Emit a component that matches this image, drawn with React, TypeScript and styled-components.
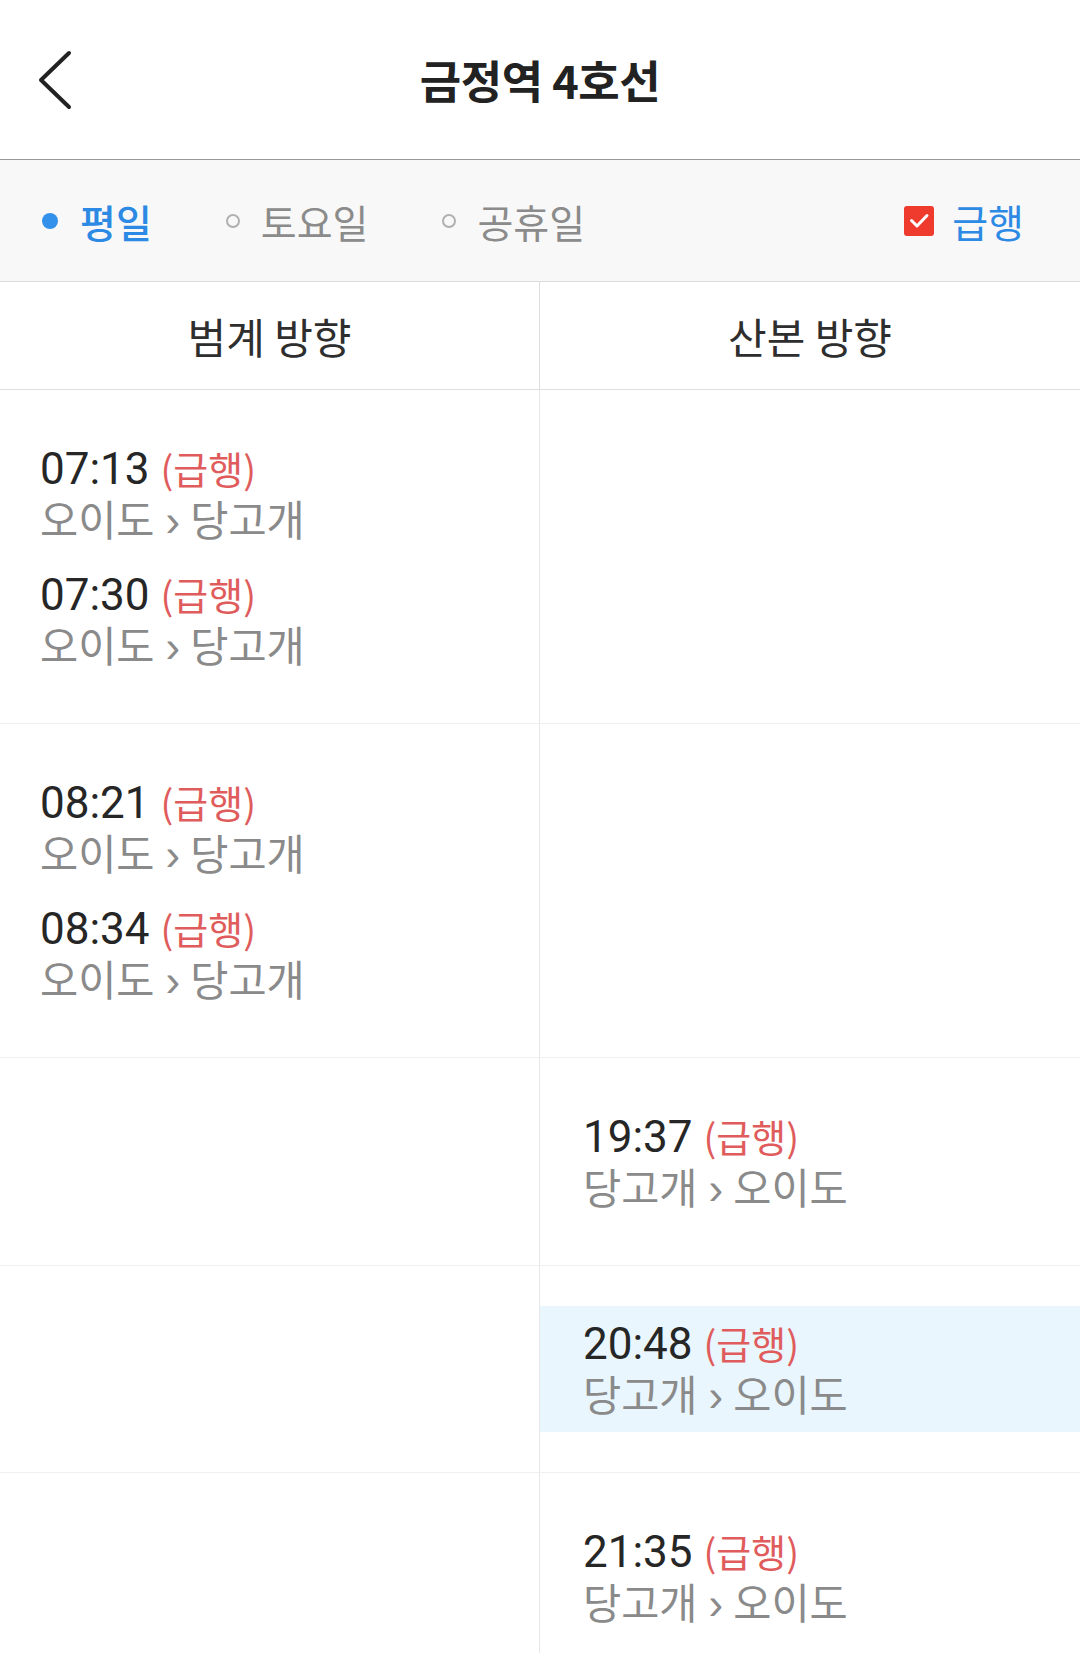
import React, { FC } from 'react'
import styled, { createGlobalStyle } from 'styled-components'

interface Train {
    time: string
    from: string
    to: string
    active?: boolean
}

interface Slot {
    left: Train[]
    right: Train[]
}

const down = (time: string): Train => ({ time, from: '오이도', to: '당고개' })
const up = (time: string, active = false): Train => ({ time, from: '당고개', to: '오이도', active })

const slots: Slot[] = [
    { left: [down('07:13'), down('07:30')], right: [] },
    { left: [down('08:21'), down('08:34')], right: [] },
    { left: [], right: [up('19:37')] },
    { left: [], right: [up('20:48', true)] },
    { left: [], right: [up('21:35')] },
]

const dayTypes = [
    { label: '평일', selected: true },
    { label: '토요일', selected: false },
    { label: '공휴일', selected: false },
]

const Entry: FC<{ train: Train; side: 'left' | 'right' }> = ({ train, side }) => (
    <EntryBox $active={!!train.active} $side={side}>
        <TimeLine>
            <Clock>{train.time}</Clock> <Express>(급행)</Express>
        </TimeLine>
        <Route>
            {train.from}
            <Arrow>›</Arrow>
            {train.to}
        </Route>
    </EntryBox>
)

const App: FC = () => {
    return (
        <>
            <GlobalStyle />
            <Page>
                <Header>
                    <BackButton aria-label="back">
                        <svg width="40" height="60" viewBox="0 0 40 60" fill="none">
                            <path
                                d="M33 3 L5 30 L33 57"
                                stroke="#222"
                                strokeWidth="4"
                                strokeLinecap="round"
                                strokeLinejoin="round"
                            />
                        </svg>
                    </BackButton>
                    <Title>금정역 4호선</Title>
                    <span />
                </Header>
                <FilterBar>
                    <DayGroup>
                        {dayTypes.map((d) => (
                            <DayOption key={d.label} $selected={d.selected}>
                                <Radio $selected={d.selected} />
                                {d.label}
                            </DayOption>
                        ))}
                    </DayGroup>
                    <ExpressToggle>
                        <CheckBox>
                            <svg width="30" height="30" viewBox="0 0 30 30" fill="none">
                                <path
                                    d="M7.5 14.5 L13 20 L23 9.5"
                                    stroke="#fff"
                                    strokeWidth="3"
                                    strokeLinecap="round"
                                    strokeLinejoin="round"
                                />
                            </svg>
                        </CheckBox>
                        급행
                    </ExpressToggle>
                </FilterBar>
                <DirectionRow>
                    <Direction>범계 방향</Direction>
                    <Direction>산본 방향</Direction>
                </DirectionRow>
                {slots.map((slot, i) => (
                    <SlotRow key={i}>
                        <Cell>
                            {slot.left.map((t) => (
                                <Entry key={t.time} train={t} side="left" />
                            ))}
                        </Cell>
                        <Cell>
                            {slot.right.map((t) => (
                                <Entry key={t.time} train={t} side="right" />
                            ))}
                        </Cell>
                    </SlotRow>
                ))}
            </Page>
        </>
    )
}
export default App

const GlobalStyle = createGlobalStyle`
    html, body {
        margin: 0;
        padding: 0;
        background: #fff;
    }
    body {
        font-family: "Noto Sans CJK KR", "Noto Sans", sans-serif;
        overflow: hidden;
    }
    * {
        box-sizing: border-box;
    }
`

const Page = styled.div`
    width: 1080px;
    min-height: 1653px;
    background: #fff;
`

const Header = styled.header`
    height: 160px;
    display: grid;
    grid-template-columns: 1fr auto 1fr;
    align-items: center;
    border-bottom: 1px solid #999;
`

const BackButton = styled.div`
    display: flex;
    align-items: center;
    padding-left: 36px;
    height: 60px;
`

const Title = styled.h1`
    margin: 0;
    font-size: 45px;
    font-weight: 700;
    color: #222;
    letter-spacing: -0.5px;
`

const FilterBar = styled.div`
    height: 122px;
    display: flex;
    align-items: center;
    justify-content: space-between;
    padding: 0 56px 0 42px;
    background: #f8f8f8;
    border-bottom: 1px solid #dcdcdc;
`

const DayGroup = styled.div`
    display: flex;
    align-items: center;
    gap: 73px;
`

const DayOption = styled.div<{ $selected: boolean }>`
    display: flex;
    align-items: center;
    gap: ${(p) => (p.$selected ? 22 : 20)}px;
    font-size: 39px;
    color: ${(p) => (p.$selected ? '#2d8ae4' : '#8b8b8b')};
    font-weight: ${(p) => (p.$selected ? 500 : 400)};
`

const Radio = styled.span<{ $selected: boolean }>`
    display: block;
    border-radius: 50%;
    ${(p) =>
        p.$selected
            ? `width: 16px; height: 16px; background: #3391ec;`
            : `width: 14px; height: 14px; border: 2.5px solid #b0b0b0; margin: 0 1px;`}
`

const ExpressToggle = styled.div`
    display: flex;
    align-items: center;
    gap: 18px;
    font-size: 39px;
    color: #2d8ae4;
`

const CheckBox = styled.span`
    display: flex;
    width: 30px;
    height: 30px;
    border-radius: 3px;
    background: #ef3a2e;
`

const DirectionRow = styled.div`
    height: 108px;
    display: grid;
    grid-template-columns: 1fr 1fr;
    border-bottom: 1px solid #dedede;
`

const Direction = styled.div`
    display: flex;
    align-items: center;
    justify-content: center;
    font-size: 42px;
    color: #2e2e2e;
    &:first-child {
        border-right: 1px solid #dedede;
    }
`

const SlotRow = styled.div`
    display: grid;
    grid-template-columns: 1fr 1fr;
    border-bottom: 1px solid #efefef;
`

const Cell = styled.div`
    padding: 40px 0;
    &:first-child {
        border-right: 1px solid #e8e8e8;
    }
`

const EntryBox = styled.div<{ $active: boolean; $side: 'left' | 'right' }>`
    padding: 12.5px 0 14px ${(p) => (p.$side === 'left' ? 40 : 43)}px;
    background: ${(p) => (p.$active ? '#e9f6fd' : 'transparent')};
`

const TimeLine = styled.div`
    height: 50px;
    line-height: 50px;
    white-space: nowrap;
    font-family: Roboto, "Noto Sans CJK KR", sans-serif;
    font-size: 44px;
    font-weight: 400;
`

const Clock = styled.span`
    color: #262626;
`

const Express = styled.span`
    font-family: "Noto Sans CJK KR", sans-serif;
    font-size: 38px;
    color: #e05c5c;
`

const Route = styled.div`
    height: 50px;
    line-height: 50px;
    font-size: 41.5px;
    color: #8a8a8a;
    white-space: nowrap;
`

const Arrow = styled.span`
    margin: 0 10px 0 11px;
    font-family: "Liberation Sans", sans-serif;
    font-size: 44px;
`
